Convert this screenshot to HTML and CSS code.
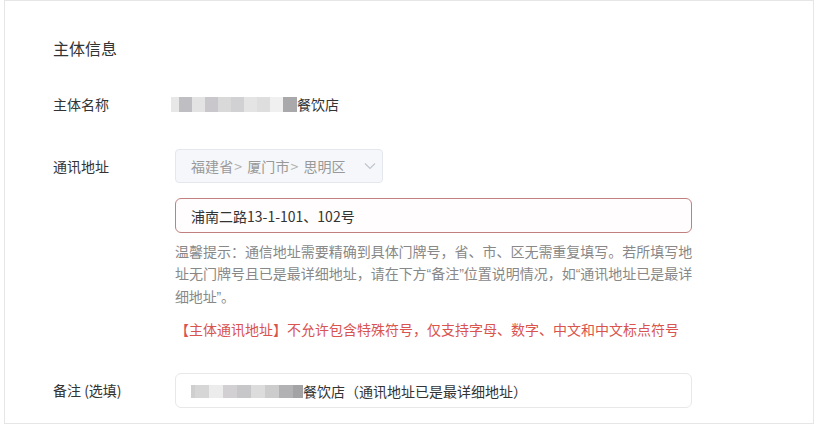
FILE: index.html
```html
<!DOCTYPE html>
<html lang="zh-CN">
<head>
<meta charset="utf-8">
<link rel="stylesheet" href="styles.css">
</head>
<body>
<div class="card">
  <div class="title">主体信息</div>

  <div class="row row-name">
    <div class="label">主体名称</div>
    <div class="value">
      <span class="blur">
        <i class="b1"></i><i class="b2"></i><i class="b3"></i><i class="b4"></i><i class="b5"></i><i class="b6"></i><i class="b7"></i><i class="b8"></i><i class="b9"></i><i class="b10"></i>
      </span><span class="plain">餐饮店</span>
    </div>
  </div>

  <div class="row row-addr">
    <div class="label label-tall">通讯地址</div>
    <div class="field">
      <div class="select">
        <span class="select-text">福建省<span class="sep">&gt;</span>厦门市<span class="sep">&gt;</span>思明区</span>
        <svg class="chev" width="12" height="8" viewBox="0 0 12 8"><path d="M1 1.5 L6 6.5 L11 1.5" fill="none" stroke="#c0c4cc" stroke-width="1.1"/></svg>
      </div>
      <div class="input input-error">浦南二路13-1-101、102号</div>
      <p class="hint"><span class="hl hl-full">温馨提示：通信地址需要精确到具体门牌号，省、市、区无需重复填写。若所填写地</span><span class="hl hl-full">址无门牌号且已是最详细地址，请在下方<span class="q">“</span>备注<span class="q">”</span>位置说明情况，如<span class="q">“</span>通讯地址已是最详</span><span class="hl">细地址<span class="q">”</span>。</span></p>
      <p class="error">【主体通讯地址】不允许包含特殊符号，仅支持字母、数字、中文和中文标点符号</p>
    </div>
  </div>

  <div class="row row-remark">
    <div class="label label-tall">备注 (选填)</div>
    <div class="field">
      <div class="input input-normal">
        <span class="blur blur-small">
          <i class="c1"></i><i class="c2"></i><i class="c3"></i><i class="c4"></i><i class="c5"></i><i class="c6"></i><i class="c7"></i><i class="c8"></i><i class="c9"></i>
        </span><span class="plain">餐饮店（通讯地址已是最详细地址）</span>
      </div>
    </div>
  </div>
</div>
</body>
</html>
```

FILE: styles.css
```css
* { box-sizing: border-box; }

html, body {
  margin: 0;
  padding: 0;
  background: #ffffff;
}

body {
  font-family: "Noto Sans CJK SC", "Noto Sans", sans-serif;
  color: #333333;
  font-size: 14px;
}

.card {
  margin-left: 4px;
  width: 810px;
  height: 424px;
  border: 1px solid #e6e6e6;
  padding: 35px 0 0 48px;
  overflow: hidden;
}

.title {
  font-size: 16px;
  line-height: 24px;
  color: #333;
  margin-bottom: 33px;
}

.row {
  display: flex;
  align-items: flex-start;
}

.label {
  width: 122px;
  flex: none;
  line-height: 22px;
  color: #333;
}

.label-tall {
  line-height: 34px;
}

.row-addr {
  margin-top: 34px;
}

.row-remark {
  margin-top: 33px;
}

.row-remark .label {
  line-height: 35px;
}

.value {
  display: flex;
  align-items: center;
  line-height: 22px;
  margin-left: -4px;
}

.blur {
  display: inline-flex;
  height: 15px;
  align-items: stretch;
  margin-top: 1px;
}

.blur i {
  display: block;
  width: 13px;
}
.b1 { background: #e7e7e7; width: 8px !important; }
.b2 { background: #bfbfc3; }
.b3 { background: #e3e3e3; }
.b4 { background: #c9c7cb; }
.b5 { background: #d9d9d9; }
.b6 { background: #d1d0d2; }
.b7 { background: #e4e4e4; }
.b8 { background: #dedede; }
.b9 { background: #f0f0f0; }
.b10 { background: #a9a9ac; width: 14px !important; }

.field {
  width: 517px;
  flex: none;
}

.select {
  width: 208px;
  height: 34px;
  background: #f5f7fa;
  border: 1px solid #e4e7ed;
  border-radius: 4px;
  display: flex;
  align-items: center;
  justify-content: space-between;
  padding: 0 6px 0 15px;
}

.select-text {
  color: #999;
  letter-spacing: 0.1px;
}

.sep {
  color: #b0b0b0;
  margin: 0 5px 0 1px;
}

.chev {
  display: block;
  margin-right: 0;
}

.input {
  height: 35px;
  border-radius: 6px;
  display: flex;
  align-items: center;
  padding: 0 15px;
  color: #333;
}

.input-error {
  margin-top: 15px;
  border: 1px solid #c08080;
  background: #fffdfd;
}

.input-normal {
  border: 1px solid #e8e8e8;
}

.hint {
  margin: 7px 0 0 0;
  line-height: 22px;
  color: #888;
}

.hl {
  display: block;
  white-space: nowrap;
  letter-spacing: -0.15px;
}

.hl-full {
  text-align: justify;
  text-align-last: justify;
  white-space: normal;
}

.q {
  font-family: "Liberation Sans", sans-serif;
}

.error {
  margin: 10px 0 0 0;
  line-height: 22px;
  color: #d9534f;
}

.blur-small {
  height: 13px;
  margin-top: 2px;
}
.blur-small i { width: 14px; }
.c1 { background: #cfcfcf; width: 4px !important; }
.c2 { background: #d6d6d6; }
.c3 { background: #ececec; }
.c4 { background: #d3d0d3; }
.c5 { background: #c7c7c9; }
.c6 { background: #dcdcdc; }
.c7 { background: #cccccc; }
.c8 { background: #b2b2b4; }
.c9 { background: #a3a3a5; width: 10px !important; }
```
